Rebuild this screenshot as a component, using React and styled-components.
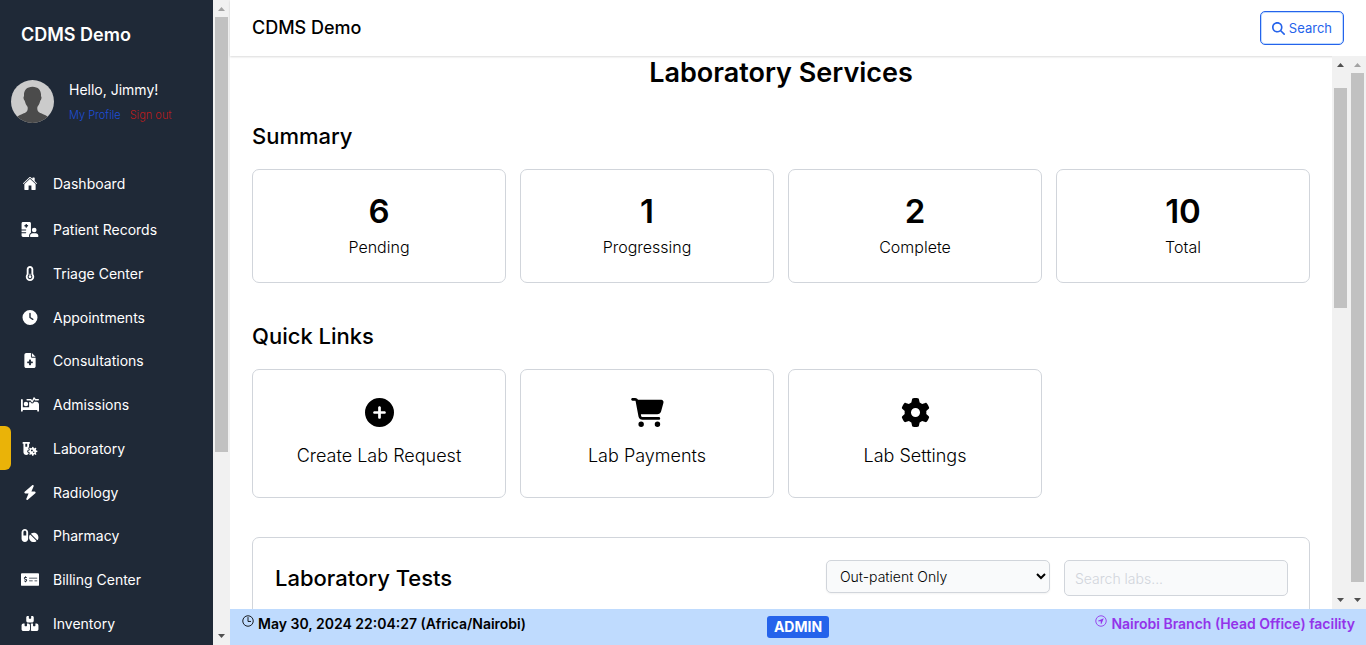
import React from 'react';
import styled, { createGlobalStyle } from 'styled-components';
import { FaMoneyCheckAlt } from 'react-icons/fa';
import {
  FaHospitalUser,
  FaTemperatureQuarter,
  FaClock,
  FaFileMedical,
  FaBedPulse,
  FaVialVirus,
  FaBolt,
  FaPills,
  FaBoxesStacked,
  FaCirclePlus,
  FaCartShopping,
  FaGear,
  FaMagnifyingGlass,
} from 'react-icons/fa6';
import {
  IoHome,
  IoTimeOutline,
  IoNavigateCircleOutline,
} from 'react-icons/io5';

const links = [
  { name: 'Dashboard', icon: IoHome },
  { name: 'Patient Records', icon: FaHospitalUser },
  { name: 'Triage Center', icon: FaTemperatureQuarter },
  { name: 'Appointments', icon: FaClock },
  { name: 'Consultations', icon: FaFileMedical },
  { name: 'Admissions', icon: FaBedPulse },
  { name: 'Laboratory', icon: FaVialVirus, active: true },
  { name: 'Radiology', icon: FaBolt },
  { name: 'Pharmacy', icon: FaPills },
  { name: 'Billing Center', icon: FaMoneyCheckAlt },
  { name: 'Inventory', icon: FaBoxesStacked },
];

const summary = [
  { label: 'Pending', count: 6 },
  { label: 'Progressing', count: 1 },
  { label: 'Complete', count: 2 },
  { label: 'Total', count: 10 },
];

const quickLinks = [
  { label: 'Create Lab Request', icon: FaCirclePlus },
  { label: 'Lab Payments', icon: FaCartShopping },
  { label: 'Lab Settings', icon: FaGear },
];

function Scrollbar({ before, size, after, atTop }) {
  return (
    <Track aria-hidden="true">
      <Arrow viewBox="0 0 17 17" $dim={atTop}>
        <path d="M5 11h7L8.500 7z" />
      </Arrow>
      <Space $grow={before} />
      <Thumb $grow={size} />
      <Space $grow={after} />
      <Arrow viewBox="0 0 17 17">
        <path d="M5 6h7l-3.500 4z" />
      </Arrow>
    </Track>
  );
}

function App() {
  return (
    <Shell>
      <GlobalStyle />
      <Sidebar>
        <Brand>CDMS Demo</Brand>
        <Profile>
          <Avatar viewBox="0 0 44 44" role="img" aria-label="Jimmy">
            <clipPath id="face"><circle cx="22" cy="22" r="22" /></clipPath>
            <g clipPath="url(#face)">
              <rect width="44" height="44" fill="#cbcbcb" />
              <path
                fill="#4b4b4b"
                d="M22 7c-6 0-9 4-8.700 9 0 1-.8 1-.4 3 .3 1.700 1.200 2 1.400 3 .6 3 1.700 4 2.700 5.500.5 3.500-.5 5-3 6.200C10 35.500 7 36 4 40v5h36v-5c-3-4-6-4.500-10-6.300-2.500-1.200-3.500-2.700-3-6.200 1-1.500 2.100-2.500 2.700-5.500.2-1 1.100-1.300 1.400-3 .4-2-.4-2-.4-3C31 11 28 7 22 7z"
              />
            </g>
          </Avatar>
          <div>
            <Hello>Hello, Jimmy!</Hello>
            <ProfileLinks>
              <SmallLink href="#profile" $color="#1d4ed8">My Profile</SmallLink>
              <SmallLink href="#signout" $color="#b91c1c">Sign out</SmallLink>
            </ProfileLinks>
          </div>
        </Profile>
        <Nav>
          {links.map(({ name, icon: Icon, active }) => (
            <NavLink key={name} href="#">
              <Marker $active={active} />
              <Icon />
              <span>{name}</span>
            </NavLink>
          ))}
        </Nav>
      </Sidebar>
      <Scrollbar before={0} size={435} after={176} atTop />
      <Main>
        <Header>
          <HeaderTitle>CDMS Demo</HeaderTitle>
          <SearchButton type="button">
            <FaMagnifyingGlass />
            Search
          </SearchButton>
        </Header>
        <Body>
          <Content>
            <PageTitle>Laboratory Services</PageTitle>
            <Section>
              <SectionTitle>Summary</SectionTitle>
              <Cards>
                {summary.map((item) => (
                  <Stat key={item.label}>
                    <Count>{item.count}</Count>
                    <StatLabel>{item.label}</StatLabel>
                  </Stat>
                ))}
              </Cards>
            </Section>
            <Section>
              <SectionTitle>Quick Links</SectionTitle>
              <Cards>
                {quickLinks.map(({ label, icon: Icon }) => (
                  <QuickLink key={label} href="#">
                    <Icon />
                    <span>{label}</span>
                  </QuickLink>
                ))}
              </Cards>
            </Section>
            <Tests>
              <TestsTitle>Laboratory Tests</TestsTitle>
              <Filters>
                <Select aria-label="Patient type">
                  <option>Out-patient Only</option>
                </Select>
                <Input type="text" aria-label="Search labs" placeholder="Search labs..." />
              </Filters>
            </Tests>
          </Content>
          <Scrollbar before={15} size={220} after={284} />
          <Scrollbar before={0} size={509} after={10} atTop />
        </Body>
        <Footer>
          <FooterText>
            <IoTimeOutline />
            May 30, 2024 22:04:27 (Africa/Nairobi)
          </FooterText>
          <Role>ADMIN</Role>
          <Facility>
            <IoNavigateCircleOutline />
            Nairobi Branch (Head Office) facility
          </Facility>
        </Footer>
      </Main>
    </Shell>
  );
}

export default App;

const GlobalStyle = createGlobalStyle`
  * {
    box-sizing: border-box;
  }

  body {
    margin: 0;
    background: #fff;
    color: #000;
    font-family: Inter, sans-serif;
    font-size: 14px;
  }

  h1, h2, p {
    margin: 0;
  }

  a {
    color: inherit;
    text-decoration: none;
  }

  button, input, select {
    font-family: inherit;
  }
`;

const Shell = styled.div`
  display: flex;
  height: 100vh;
  overflow: hidden;
`;

const Sidebar = styled.aside`
  display: flex;
  flex-direction: column;
  width: 213px;
  flex-shrink: 0;
  overflow: hidden;
  background: #1f2937;
  color: #fff;
`;

const Brand = styled.p`
  padding: 23px 21px 0;
  font-size: 18px;
  font-weight: 600;
  line-height: 24px;
`;

const Profile = styled.div`
  display: flex;
  align-items: center;
  gap: 15px;
  padding: 32px 11px 0;
`;

const Avatar = styled.svg`
  width: 43px;
  height: 43px;
`;

const Hello = styled.p`
  line-height: 22px;
`;

const ProfileLinks = styled.div`
  display: flex;
  gap: 9px;
  margin-top: 6px;
`;

const SmallLink = styled.a`
  color: ${(props) => props.$color};
  font-size: 11px;
  font-weight: 300;
  line-height: 16px;
`;

const Nav = styled.nav`
  display: flex;
  flex: 1;
  flex-direction: column;
  margin-top: 39px;
`;

const NavLink = styled.a`
  display: flex;
  flex: 1 0 43px;
  align-items: center;

  &:first-child {
    margin-bottom: 2px;
  }

  svg {
    width: 18px;
    height: 15px;
    margin: 0 14px 0 10px;
  }
`;

const Marker = styled.span`
  align-self: stretch;
  width: 11px;
  border-radius: 0 6px 6px 0;
  background: ${(props) => (props.$active ? '#eab308' : 'transparent')};
`;

const Track = styled.div`
  display: flex;
  flex-direction: column;
  align-items: center;
  width: 17px;
  flex-shrink: 0;
  background: #f1f1f1;
`;

const Arrow = styled.svg`
  width: 17px;
  height: 17px;
  flex-shrink: 0;
  fill: ${(props) => (props.$dim ? '#a3a3a3' : '#505050')};
`;

const Space = styled.div`
  flex: ${(props) => props.$grow} 1 0;
`;

const Thumb = styled.div`
  flex: ${(props) => props.$grow} 1 0;
  width: 13px;
  background: #c1c1c1;
`;

const Main = styled.main`
  display: flex;
  flex: 1;
  flex-direction: column;
  min-width: 0;
`;

const Header = styled.header`
  display: flex;
  align-items: center;
  justify-content: space-between;
  flex-shrink: 0;
  height: 56px;
  padding: 0 22px;
  box-shadow: 0 1px 2px rgba(0, 0, 0, 0.15);
`;

const HeaderTitle = styled.p`
  font-size: 18px;
  font-weight: 500;
  line-height: 24px;
`;

const SearchButton = styled.button`
  display: flex;
  align-items: center;
  gap: 4px;
  height: 34px;
  padding: 0 11px;
  border: 1px solid #2563eb;
  border-radius: 5px;
  background: #fff;
  box-shadow: inset 0 0 0 1px #bfdbfe;
  color: #2563eb;
  font-size: 13px;

  svg {
    width: 13px;
    height: 13px;
  }
`;

const Body = styled.div`
  display: flex;
  flex: 1;
  min-height: 0;
`;

const Content = styled.div`
  display: flex;
  flex: 1;
  flex-direction: column;
  min-width: 0;
  padding: 0 22px;
  overflow: hidden;
`;

const PageTitle = styled.h1`
  margin-bottom: 33px;
  font-size: 27px;
  font-weight: 600;
  line-height: 33px;
  text-align: center;
`;

const Section = styled.section`
  flex-shrink: 0;
  margin-bottom: 39px;
`;

const SectionTitle = styled.h2`
  margin-bottom: 19px;
  font-size: 22px;
  font-weight: 500;
  line-height: 28px;
`;

const Cards = styled.div`
  display: grid;
  grid-template-columns: repeat(4, 1fr);
  gap: 14px;
`;

const Stat = styled.div`
  padding: 22px;
  border: 1px solid #d1d5db;
  border-radius: 7px;
  text-align: center;
`;

const Count = styled.p`
  font-size: 33px;
  font-weight: 600;
  line-height: 38px;
`;

const StatLabel = styled.p`
  margin-top: 4px;
  font-size: 16px;
  font-weight: 300;
  line-height: 26px;
`;

const QuickLink = styled.a`
  display: flex;
  flex-direction: column;
  align-items: center;
  gap: 15px;
  padding: 28px 22px;
  border: 1px solid #d1d5db;
  border-radius: 7px;
  font-size: 18px;
  font-weight: 300;
  line-height: 27px;

  svg {
    width: 33px;
    height: 29px;
  }
`;

const Tests = styled.section`
  display: flex;
  align-items: center;
  justify-content: space-between;
  padding: 22px 21px 22px 22px;
  border: 1px solid #d1d5db;
  border-radius: 7px;
`;

const TestsTitle = styled.h2`
  font-size: 22px;
  font-weight: 500;
  line-height: 28px;
`;

const Filters = styled.div`
  display: flex;
  align-items: flex-start;
  gap: 14px;
`;

const Select = styled.select`
  width: 224px;
  height: 33px;
  padding: 0 9px;
  border: 1px solid #d1d5db;
  border-radius: 5px;
  background: #f9fafb;
  box-shadow: 0 1px 2px rgba(0, 0, 0, 0.05);
  color: #000;
  font-size: 14px;
  font-weight: 300;
`;

const Input = styled.input`
  width: 224px;
  height: 36px;
  padding: 0 10px;
  border: 1px solid #d1d5db;
  border-radius: 5px;
  background: #f9fafb;
  font-size: 14px;
  font-weight: 300;

  &::placeholder {
    color: #d1d5db;
  }
`;

const Footer = styled.footer`
  display: grid;
  grid-template-columns: 1fr auto 1fr;
  align-items: start;
  flex-shrink: 0;
  height: 36px;
  padding: 4px 11px;
  background: #bfdbfe;
`;

const FooterText = styled.p`
  display: flex;
  align-items: flex-start;
  gap: 3px;
  font-weight: 600;
  line-height: 22px;

  svg {
    width: 14px;
    height: 16px;
  }
`;

const Facility = styled(FooterText)`
  justify-content: flex-end;
  color: #9333ea;
`;

const Role = styled.span`
  margin-top: 3px;
  padding: 0 7px;
  border-radius: 3px;
  background: #2563eb;
  color: #fff;
  font-weight: 700;
  line-height: 22px;
`;
